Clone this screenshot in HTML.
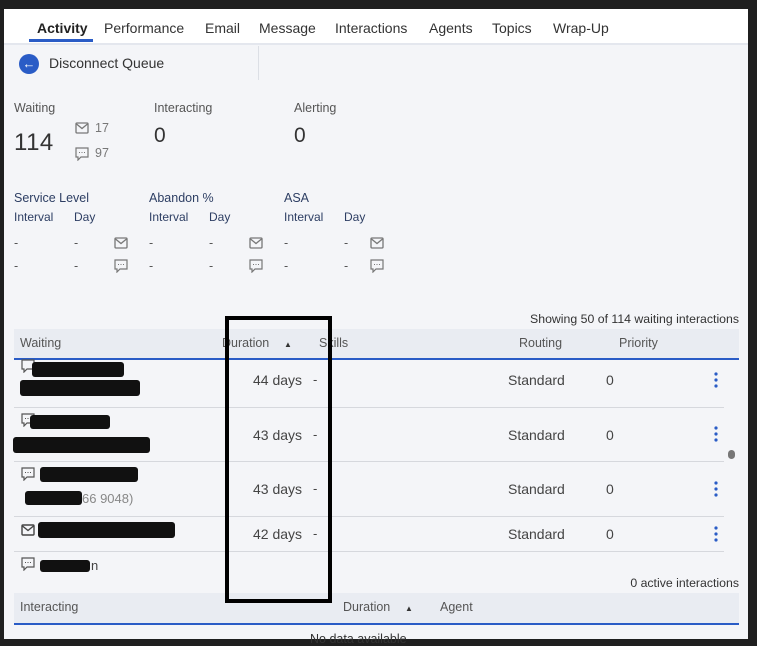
<!DOCTYPE html>
<html><head><style>
*{margin:0;padding:0;box-sizing:border-box}
body{width:757px;height:639px;background:#1f1f1f;font-family:"Liberation Sans",sans-serif;color:#333;position:relative;overflow:hidden}
.pg{position:absolute;left:4px;top:9px;width:744px;height:630px;background:#f4f5f8}
.tabs{position:absolute;left:0;top:0;width:744px;height:36px;background:#fff;border-bottom:2px solid #e4e7ee}
.t{position:absolute;top:11px;font-size:14px;color:#333}
.a{position:absolute;font-size:12.5px;color:#555}
.d{position:absolute;font-size:13px;color:#444}
.b{position:absolute;background:#111;border-radius:3px}
.ic{position:absolute}
.hl{position:absolute;height:1px;background:#d6d8dd}
</style></head><body>
<div class="pg">
<div class="tabs">
<span class="t" style="left:33px;font-weight:bold;color:#222">Activity</span>
<div style="position:absolute;left:25px;top:30px;width:64px;height:3px;background:#2a5cc6"></div>
<span class="t" style="left:100px">Performance</span>
<span class="t" style="left:201px">Email</span>
<span class="t" style="left:255px">Message</span>
<span class="t" style="left:331px">Interactions</span>
<span class="t" style="left:425px">Agents</span>
<span class="t" style="left:488px">Topics</span>
<span class="t" style="left:549px">Wrap-Up</span>
</div>
<div style="position:absolute;left:15px;top:45px;width:20px;height:20px;border-radius:50%;background:#2a5cc6;color:#fff;font-size:13px;text-align:center;line-height:20px">&#8592;</div>
<span style="position:absolute;left:45px;top:46px;font-size:14px;color:#333">Disconnect Queue</span>
<div style="position:absolute;left:254px;top:37px;width:1px;height:34px;background:#dcdfe5"></div>
</div>
<span class="a" style="left:14px;top:101px">Waiting</span>
<span style="position:absolute;left:14px;top:129px;font-size:24px;color:#333;letter-spacing:0.5px">114</span>
<svg class="ic" style="left:75px;top:122px" width="14" height="12"><rect x="1" y="1" width="12" height="10" rx="1" fill="none" stroke="#777" stroke-width="1.3"/><path d="M1.5 2l5.5 4.5 5.5-4.5" fill="none" stroke="#777" stroke-width="1.3"/></svg>
<span class="a" style="left:95px;top:121px;color:#777">17</span>
<svg class="ic" style="left:75px;top:147px" width="14" height="14"><path d="M1 1h12v9H6l-3 3v-3H1z" fill="none" stroke="#777" stroke-width="1.2"/><path d="M4 5.5h1M6.5 5.5h1M9 5.5h1" stroke="#777"/></svg>
<span class="a" style="left:95px;top:146px;color:#777">97</span>
<span class="a" style="left:154px;top:101px">Interacting</span>
<span style="position:absolute;left:154px;top:124px;font-size:21px;color:#333">0</span>
<span class="a" style="left:294px;top:101px">Alerting</span>
<span style="position:absolute;left:294px;top:124px;font-size:21px;color:#333">0</span>
<span class="a" style="left:14px;top:191px;color:#2d3e63">Service Level</span>
<span class="a" style="left:149px;top:191px;color:#2d3e63">Abandon %</span>
<span class="a" style="left:284px;top:191px;color:#2d3e63">ASA</span>
<span class="a" style="left:14px;top:210px;font-size:12px;color:#2d3e63">Interval</span><span class="a" style="left:74px;top:210px;font-size:12px;color:#2d3e63">Day</span>
<span class="a" style="left:149px;top:210px;font-size:12px;color:#2d3e63">Interval</span><span class="a" style="left:209px;top:210px;font-size:12px;color:#2d3e63">Day</span>
<span class="a" style="left:284px;top:210px;font-size:12px;color:#2d3e63">Interval</span><span class="a" style="left:344px;top:210px;font-size:12px;color:#2d3e63">Day</span>
<span class="a" style="left:14px;top:236px">-</span><span class="a" style="left:74px;top:236px">-</span>
<span class="a" style="left:14px;top:259px">-</span><span class="a" style="left:74px;top:259px">-</span>
<span class="a" style="left:149px;top:236px">-</span><span class="a" style="left:209px;top:236px">-</span>
<span class="a" style="left:149px;top:259px">-</span><span class="a" style="left:209px;top:259px">-</span>
<span class="a" style="left:284px;top:236px">-</span><span class="a" style="left:344px;top:236px">-</span>
<span class="a" style="left:284px;top:259px">-</span><span class="a" style="left:344px;top:259px">-</span>
<svg class="ic" style="left:114px;top:237px" width="14" height="12"><rect x="1" y="1" width="12" height="10" rx="1" fill="none" stroke="#777" stroke-width="1.3"/><path d="M1.5 2l5.5 4.5 5.5-4.5" fill="none" stroke="#777" stroke-width="1.3"/></svg>
<svg class="ic" style="left:249px;top:237px" width="14" height="12"><rect x="1" y="1" width="12" height="10" rx="1" fill="none" stroke="#777" stroke-width="1.3"/><path d="M1.5 2l5.5 4.5 5.5-4.5" fill="none" stroke="#777" stroke-width="1.3"/></svg>
<svg class="ic" style="left:370px;top:237px" width="14" height="12"><rect x="1" y="1" width="12" height="10" rx="1" fill="none" stroke="#777" stroke-width="1.3"/><path d="M1.5 2l5.5 4.5 5.5-4.5" fill="none" stroke="#777" stroke-width="1.3"/></svg>
<svg class="ic" style="left:114px;top:259px" width="14" height="14"><path d="M1 1h12v9H6l-3 3v-3H1z" fill="none" stroke="#777" stroke-width="1.2"/><path d="M4 5.5h1M6.5 5.5h1M9 5.5h1" stroke="#777"/></svg>
<svg class="ic" style="left:249px;top:259px" width="14" height="14"><path d="M1 1h12v9H6l-3 3v-3H1z" fill="none" stroke="#777" stroke-width="1.2"/><path d="M4 5.5h1M6.5 5.5h1M9 5.5h1" stroke="#777"/></svg>
<svg class="ic" style="left:370px;top:259px" width="14" height="14"><path d="M1 1h12v9H6l-3 3v-3H1z" fill="none" stroke="#777" stroke-width="1.2"/><path d="M4 5.5h1M6.5 5.5h1M9 5.5h1" stroke="#777"/></svg>

<span class="a" style="right:18px;top:312px;color:#333;font-size:12.3px">Showing 50 of 114 waiting interactions</span>
<div style="position:absolute;left:14px;top:329px;width:725px;height:31px;background:#e9ecf2;border-bottom:2px solid #2a5cc6"></div>
<span class="a" style="left:20px;top:336px">Waiting</span>
<span class="a" style="left:222px;top:336px">Duration</span><span style="position:absolute;left:284px;top:340px;font-size:8px;color:#333">&#9650;</span>
<span class="a" style="left:319px;top:336px">Skills</span>
<span class="a" style="left:519px;top:336px">Routing</span>
<span class="a" style="left:619px;top:336px">Priority</span>

<div class="hl" style="left:14px;top:407px;width:710px"></div>
<div class="hl" style="left:14px;top:461px;width:710px"></div>
<div class="hl" style="left:14px;top:516px;width:710px"></div>
<div class="hl" style="left:14px;top:551px;width:710px"></div>

<span class="d" style="left:253px;top:372px;font-size:14px">44 days</span><span class="d" style="left:313px;top:372px">-</span>
<span class="d" style="left:253px;top:427px;font-size:14px">43 days</span><span class="d" style="left:313px;top:427px">-</span>
<span class="d" style="left:253px;top:481px;font-size:14px">43 days</span><span class="d" style="left:313px;top:481px">-</span>
<span class="d" style="left:253px;top:526px;font-size:14px">42 days</span><span class="d" style="left:313px;top:526px">-</span>
<span class="d" style="left:508px;top:372px;font-size:14px">Standard</span><span class="d" style="left:606px;top:372px;font-size:14px">0</span>
<span class="d" style="left:508px;top:427px;font-size:14px">Standard</span><span class="d" style="left:606px;top:427px;font-size:14px">0</span>
<span class="d" style="left:508px;top:481px;font-size:14px">Standard</span><span class="d" style="left:606px;top:481px;font-size:14px">0</span>
<span class="d" style="left:508px;top:526px;font-size:14px">Standard</span><span class="d" style="left:606px;top:526px;font-size:14px">0</span>
<svg class="ic" style="left:713px;top:372px" width="6" height="16"><circle cx="3" cy="2" r="1.6" fill="#2a5cc6"/><circle cx="3" cy="8" r="1.6" fill="#2a5cc6"/><circle cx="3" cy="14" r="1.6" fill="#2a5cc6"/></svg>
<svg class="ic" style="left:713px;top:426px" width="6" height="16"><circle cx="3" cy="2" r="1.6" fill="#2a5cc6"/><circle cx="3" cy="8" r="1.6" fill="#2a5cc6"/><circle cx="3" cy="14" r="1.6" fill="#2a5cc6"/></svg>
<svg class="ic" style="left:713px;top:481px" width="6" height="16"><circle cx="3" cy="2" r="1.6" fill="#2a5cc6"/><circle cx="3" cy="8" r="1.6" fill="#2a5cc6"/><circle cx="3" cy="14" r="1.6" fill="#2a5cc6"/></svg>
<svg class="ic" style="left:713px;top:526px" width="6" height="16"><circle cx="3" cy="2" r="1.6" fill="#2a5cc6"/><circle cx="3" cy="8" r="1.6" fill="#2a5cc6"/><circle cx="3" cy="14" r="1.6" fill="#2a5cc6"/></svg>
<div style="position:absolute;left:728px;top:450px;width:7px;height:9px;border-radius:4px;background:#777"></div>

<svg class="ic" style="left:21px;top:359px" width="14" height="14"><path d="M1 1h12v9H6l-3 3v-3H1z" fill="none" stroke="#555" stroke-width="1.2"/></svg>
<svg class="ic" style="left:21px;top:413px" width="14" height="14"><path d="M1 1h12v9H6l-3 3v-3H1z" fill="none" stroke="#555" stroke-width="1.2"/><path d="M4 5.5h1M6.5 5.5h1M9 5.5h1" stroke="#555"/></svg>
<svg class="ic" style="left:21px;top:467px" width="14" height="14"><path d="M1 1h12v9H6l-3 3v-3H1z" fill="none" stroke="#555" stroke-width="1.2"/><path d="M4 5.5h1M6.5 5.5h1M9 5.5h1" stroke="#555"/></svg>
<svg class="ic" style="left:21px;top:524px" width="14" height="12"><rect x="1" y="1" width="12" height="10" rx="1" fill="none" stroke="#444" stroke-width="1.4"/><path d="M1.5 2l5.5 4.5 5.5-4.5" fill="none" stroke="#444" stroke-width="1.4"/></svg>
<svg class="ic" style="left:21px;top:557px" width="14" height="14"><path d="M1 1h12v9H6l-3 3v-3H1z" fill="none" stroke="#555" stroke-width="1.2"/><path d="M4 5.5h1M6.5 5.5h1M9 5.5h1" stroke="#555"/></svg>
<div class="b" style="left:32px;top:362px;width:92px;height:15px"></div>
<div class="b" style="left:20px;top:380px;width:120px;height:16px"></div>
<div class="b" style="left:30px;top:415px;width:80px;height:14px"></div>
<div class="b" style="left:13px;top:437px;width:137px;height:16px"></div>
<div class="b" style="left:40px;top:467px;width:98px;height:15px"></div>
<div class="b" style="left:25px;top:491px;width:57px;height:14px"></div>
<span class="d" style="left:82px;top:491px;color:#888">66 9048)</span>
<div class="b" style="left:38px;top:522px;width:137px;height:16px"></div>
<div class="b" style="left:40px;top:560px;width:50px;height:12px"></div>
<span class="d" style="left:91px;top:558px">n</span>

<span class="a" style="right:18px;top:576px;color:#333;font-size:12.3px">0 active interactions</span>
<div style="position:absolute;left:14px;top:593px;width:725px;height:32px;background:#e9ecf2;border-bottom:2px solid #2a5cc6"></div>
<span class="a" style="left:20px;top:600px">Interacting</span>
<span class="a" style="left:343px;top:600px">Duration</span><span style="position:absolute;left:405px;top:604px;font-size:8px;color:#333">&#9650;</span>
<span class="a" style="left:440px;top:600px">Agent</span>
<span class="a" style="left:310px;top:632px;color:#333">No data available</span>

<div style="position:absolute;left:225px;top:316px;width:107px;height:287px;border:4px solid #000"></div>
</body></html>
